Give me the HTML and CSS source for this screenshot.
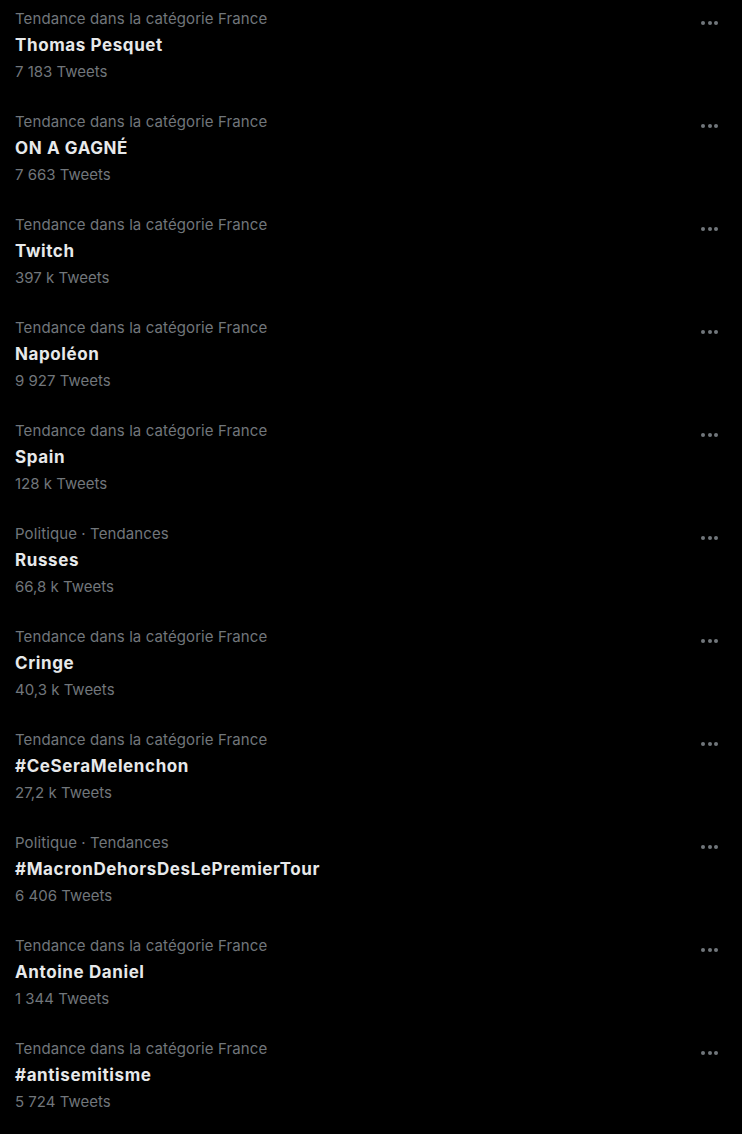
FILE: index.html
```html
<!DOCTYPE html>
<html lang="fr">
<head>
<meta charset="utf-8">
<link rel="stylesheet" href="styles.css">
</head>
<body>
<div class="list">
  <div class="item"><div class="text"><div class="cat">Tendance dans la catégorie France</div><div class="title">Thomas Pesquet</div><div class="count">7 183 Tweets</div></div><div class="more"><span></span><span></span><span></span></div></div>
  <div class="item"><div class="text"><div class="cat">Tendance dans la catégorie France</div><div class="title">ON A GAGNÉ</div><div class="count">7 663 Tweets</div></div><div class="more"><span></span><span></span><span></span></div></div>
  <div class="item"><div class="text"><div class="cat">Tendance dans la catégorie France</div><div class="title">Twitch</div><div class="count">397 k Tweets</div></div><div class="more"><span></span><span></span><span></span></div></div>
  <div class="item"><div class="text"><div class="cat">Tendance dans la catégorie France</div><div class="title">Napoléon</div><div class="count">9 927 Tweets</div></div><div class="more"><span></span><span></span><span></span></div></div>
  <div class="item"><div class="text"><div class="cat">Tendance dans la catégorie France</div><div class="title">Spain</div><div class="count">128 k Tweets</div></div><div class="more"><span></span><span></span><span></span></div></div>
  <div class="item"><div class="text"><div class="cat">Politique · Tendances</div><div class="title">Russes</div><div class="count">66,8 k Tweets</div></div><div class="more"><span></span><span></span><span></span></div></div>
  <div class="item"><div class="text"><div class="cat">Tendance dans la catégorie France</div><div class="title">Cringe</div><div class="count">40,3 k Tweets</div></div><div class="more"><span></span><span></span><span></span></div></div>
  <div class="item"><div class="text"><div class="cat">Tendance dans la catégorie France</div><div class="title">#CeSeraMelenchon</div><div class="count">27,2 k Tweets</div></div><div class="more"><span></span><span></span><span></span></div></div>
  <div class="item"><div class="text"><div class="cat">Politique · Tendances</div><div class="title">#MacronDehorsDesLePremierTour</div><div class="count">6 406 Tweets</div></div><div class="more"><span></span><span></span><span></span></div></div>
  <div class="item"><div class="text"><div class="cat">Tendance dans la catégorie France</div><div class="title">Antoine Daniel</div><div class="count">1 344 Tweets</div></div><div class="more"><span></span><span></span><span></span></div></div>
  <div class="item"><div class="text"><div class="cat">Tendance dans la catégorie France</div><div class="title">#antisemitisme</div><div class="count">5 724 Tweets</div></div><div class="more"><span></span><span></span><span></span></div></div>
</div>
</body>
</html>
```
FILE: styles.css
```css
html, body {
  margin: 0;
  padding: 0;
  background: #000;
}
body {
  font-family: Inter, "Noto Sans", sans-serif;
  color: #e7e9ea;
}
.list {
  display: flex;
  flex-direction: column;
}
.item {
  height: 103px;
  box-sizing: border-box;
  padding: 9px 24px 0 15px;
  display: flex;
  justify-content: space-between;
  align-items: flex-start;
}
.cat {
  font-size: 15px;
  line-height: 20px;
  letter-spacing: 0.1px;
  color: #71767b;
}
.title {
  margin-top: 4px;
  font-size: 17px;
  line-height: 24px;
  font-weight: 700;
  letter-spacing: 0.6px;
  color: #e7e9ea;
}
.count {
  margin-top: 5px;
  font-size: 15px;
  line-height: 20px;
  color: #71767b;
}
.more {
  display: flex;
  gap: 2.5px;
  margin-top: 12px;
}
.more span {
  width: 4px;
  height: 4px;
  border-radius: 50%;
  background: #71767b;
}
```
